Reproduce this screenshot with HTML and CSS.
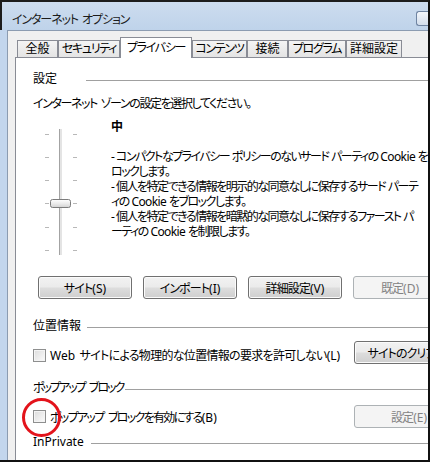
FILE: index.html
```html
<!DOCTYPE html>
<html lang="ja">
<head>
<meta charset="utf-8">
<title>インターネット オプション</title>
<link rel="stylesheet" href="styles.css">
</head>
<body>
<div class="window">
  <div class="titlebar">
    <span class="title">インターネット オプション</span>
    <span class="help"></span>
  </div>
  <div class="frame">
    <div class="client">
      <div class="tabs">
        <div class="tab w1">全般</div>
        <div class="tab kana w2">セキュリティ</div>
        <div class="tab kana tab-sel w3">プライバシー</div>
        <div class="tab kana w4">コンテンツ</div>
        <div class="tab w5">接続</div>
        <div class="tab kana w6">プログラム</div>
        <div class="tab w7">詳細設定</div>
      </div>
      <div class="page">
        <div class="group-head head-settings"><span>設定</span></div>
        <div class="instruction">インターネット ゾーンの設定を選択してください。</div>
        <div class="slider-area">
          <svg class="slider" width="78" height="145" viewBox="0 0 78 145">
            <defs>
              <linearGradient id="thumbg" x1="0" y1="0" x2="0" y2="1">
                <stop offset="0" stop-color="#ffffff"/>
                <stop offset="0.5" stop-color="#ececec"/>
                <stop offset="1" stop-color="#d2d2d2"/>
              </linearGradient>
            </defs>
            <g fill="#b8b8b8">
              <rect x="12" y="15" width="4" height="1"/>
              <rect x="12" y="38" width="4" height="1"/>
              <rect x="12" y="61" width="4" height="1"/>
              <rect x="12" y="84" width="4" height="1"/>
              <rect x="12" y="108" width="4" height="1"/>
              <rect x="12" y="131" width="4" height="1"/>
              <rect x="40" y="15" width="4" height="1"/>
              <rect x="40" y="38" width="4" height="1"/>
              <rect x="40" y="61" width="4" height="1"/>
              <rect x="40" y="84" width="4" height="1"/>
              <rect x="40" y="108" width="4" height="1"/>
              <rect x="40" y="131" width="4" height="1"/>
            </g>
            <rect x="26" y="10" width="1" height="126" fill="#a3a3a3"/>
            <rect x="27" y="10" width="2" height="126" fill="#e4e4e4"/>
            <rect x="17.5" y="80.5" width="20" height="8" rx="2" fill="url(#thumbg)" stroke="#7c7c7c"/>
          </svg>
          <div class="desc">
            <div class="level">中</div>
            <div class="desc-lines">
              <div>- コンパクトなプライバシー ポリシーのないサード パーティの <span class="lat">Cookie</span> をブ</div>
              <div>ロックします。</div>
              <div>- 個人を特定できる情報を明示的な同意なしに保存するサード パーテ</div>
              <div>ィの <span class="lat">Cookie</span> をブロックします。</div>
              <div>- 個人を特定できる情報を暗黙的な同意なしに保存するファースト パ</div>
              <div>ーティの <span class="lat">Cookie</span> を制限します。</div>
            </div>
          </div>
        </div>
        <div class="btn-row">
          <button class="btn">サイト<span class="lat">(S)</span></button>
          <button class="btn">インポート<span class="lat">(I)</span></button>
          <button class="btn">詳細設定<span class="lat">(V)</span></button>
          <button class="btn btn-disabled">既定<span class="lat">(D)</span></button>
        </div>

        <div class="group-head head-location"><span>位置情報</span></div>
        <div class="opt-row">
          <label class="check check-low"><span class="box"></span><span class="check-text-web"><span class="lat">Web</span> サイトによる物理的な位置情報の要求を許可しない<span class="lat">(L)</span></span></label>
          <button class="btn">サイトのクリア<span class="lat">(C)</span></button>
        </div>

        <div class="group-head head-popup"><span>ポップアップ ブロック</span></div>
        <div class="opt-row opt-row-2">
          <label class="check"><span class="box box-marked"></span><span class="check-text-popup">ポップアップ ブロックを有効にする<span class="lat">(B)</span></span></label>
          <button class="btn btn-disabled">設定<span class="lat">(E)</span></button>
        </div>

        <div class="group-head head-private"><span>InPrivate</span></div>
      </div>
    </div>
  </div>
</div>
</body>
</html>
```
FILE: styles.css
```css
* { box-sizing: border-box; }
html, body { margin: 0; padding: 0; background: #ffffff; }
body {
  font-family: "Noto Sans", "Noto Sans CJK JP", sans-serif;
  font-size: 12px;
  color: #000;
  font-feature-settings: "palt";
}

.lat { letter-spacing: 0; }

.window {
  width: 430px;
  height: 462px;
  border-top: 2px solid #1c1c1c;
  border-right: 2px solid #111;
  border-bottom: 2px solid #111;
  overflow: hidden;
  display: flex;
  flex-direction: column;
  background: #c3d6ed;
}

.titlebar {
  flex: none;
  height: 28px;
  display: flex;
  align-items: flex-start;
  padding-left: 10px;
  border-left: 2px solid #1c1c1c;
  background: linear-gradient(#cddcef, #bfd3ea);
}
.title {
  margin-top: 10px;
  line-height: 16px;
  font-size: 12px;
  color: #1b1b1b;
  letter-spacing: -1.1px;
  word-spacing: 2px;
}
.help {
  margin-left: auto;
  margin-top: 9px;
  width: 12px;
  height: 15px;
  border: 1px solid #6f84a2;
  border-right: none;
  border-radius: 3px 0 0 3px;
  background: linear-gradient(#f3f6fb, #d2ddeb);
}

.frame {
  flex: 1;
  display: flex;
  padding-left: 7px;
  min-height: 0;
}
.client {
  flex: 1;
  display: flex;
  flex-direction: column;
  background: #f0f0f0;
  border-left: 1px solid #8c9cb1;
  border-top: 1px solid #8c9cb1;
  padding: 6px 0 0 7px;
  min-width: 0;
}

.tabs {
  flex: none;
  height: 20px;
  display: flex;
  align-items: flex-end;
  padding-left: 2px;
}
.tab {
  height: 17px;
  border: 1px solid #898c95;
  border-bottom: none;
  background: linear-gradient(#f4f4f4, #e4e4e4);
  text-align: center;
  line-height: 16px;
  white-space: nowrap;
}
.kana { letter-spacing: -1.3px; }
.tab-sel {
  position: relative;
  z-index: 1;
  height: 21px;
  margin-bottom: -1px;
  background: #ffffff;
  line-height: 19px;
}
.w1 { width: 41px; }
.w2 { width: 62px; }
.w3 { width: 72px; }
.w4 { width: 55px; }
.w5 { width: 41px; }
.w6 { width: 58px; }
.w7 { width: 56px; }

.page {
  flex: 1;
  background: #ffffff;
  border-left: 1px solid #898c95;
  border-top: 1px solid #898c95;
  padding-left: 17px;
  white-space: nowrap;
  min-width: 0;
}

.group-head {
  display: flex;
  align-items: center;
  height: 16px;
  line-height: 16px;
}
.group-head::after {
  content: "";
  flex: 1;
  height: 1px;
  margin-top: 2px;
  background: #a0a0a0;
}
.head-settings { margin-top: 13px; }
.head-settings::after { margin-left: 29px; }
.head-location { margin-top: 19px; }
.head-location::after { margin-left: 6px; }
.head-popup { margin-top: 16px; letter-spacing: -2px; word-spacing: 3px; }
.head-popup::after { margin-left: 2px; }
.head-private { margin-top: 6px; }
.head-private::after { margin-left: 7px; }

.instruction {
  margin-top: 9px;
  line-height: 16px;
  letter-spacing: -1.4px;
  word-spacing: 2px;
}

.slider-area {
  margin-top: 7px;
  height: 157px;
  display: flex;
}
.slider { flex: none; display: block; }
.desc { line-height: 15px; }
.level { font-weight: bold; }
.desc-lines { margin-top: 15px; letter-spacing: -1.5px; word-spacing: 1px; }
.desc-lines .lat { letter-spacing: -0.6px; }

.btn-row {
  display: flex;
  gap: 11px;
  padding-left: 5px;
  height: 23px;
}
.btn {
  flex: none;
  width: 94px;
  height: 23px;
  padding: 0;
  border: 1px solid #707070;
  border-radius: 3px;
  background: linear-gradient(#f2f2f2 0%, #ebebeb 48%, #dddddd 52%, #cfcfcf 100%);
  box-shadow: inset 0 0 0 1px #fbfbfb;
  font: inherit;
  font-feature-settings: "palt";
  letter-spacing: -0.9px;
  color: #000;
  white-space: nowrap;
}
.opt-row .btn { width: 110px; }
.btn-disabled {
  border-color: #adb2b5;
  background: #f4f4f4;
  box-shadow: none;
  color: #838383;
}

.opt-row {
  margin-top: 7px;
  display: grid;
  grid-template-columns: 321px 110px;
  height: 23px;
}
.opt-row-2 { margin-top: 9px; }
.check {
  display: flex;
  align-items: center;
  gap: 4px;
}
.check-low { padding-top: 5px; }
.check-text-web { letter-spacing: -0.7px; word-spacing: 2px; }
.check-text-popup { letter-spacing: -1.7px; word-spacing: 3px; }
.box {
  position: relative;
  flex: none;
  width: 13px;
  height: 13px;
  border: 1px solid #8e8f8f;
  background: linear-gradient(135deg, #dcdcdc, #fbfbfb);
  box-shadow: inset 0 0 0 1px #f4f4f4;
}
.box-marked::after {
  content: "";
  position: absolute;
  left: -12px;
  top: -13px;
  width: 33px;
  height: 33px;
  border: 3px solid #e3131b;
  border-radius: 50%;
}
```
